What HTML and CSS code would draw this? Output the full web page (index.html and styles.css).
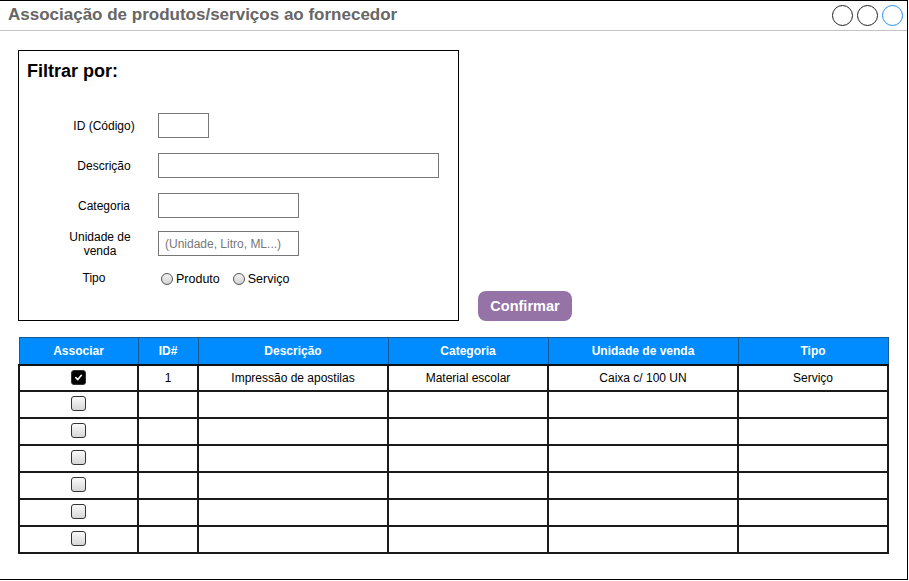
FILE: index.html
```html
<!DOCTYPE html>
<html lang="pt">
<head>
<meta charset="utf-8">
<title>Associação de produtos/serviços ao fornecedor</title>
<link rel="stylesheet" href="styles.css">
</head>
<body>
<div class="window">
  <div class="titlebar">
    <span class="title">Associação de produtos/serviços ao fornecedor</span>
    <div class="controls">
      <span class="dot"></span><span class="dot"></span><span class="dot blue"></span>
    </div>
  </div>
  <div class="content">
    <div class="top">
      <div class="filter">
        <h2 class="filter-title">Filtrar por:</h2>
        <div class="form">
          <div class="row r1"><span class="label">ID (Código)</span><span class="input w-id"></span></div>
          <div class="row r2"><span class="label">Descrição</span><span class="input w-desc"></span></div>
          <div class="row r3"><span class="label">Categoria</span><span class="input w-cat"></span></div>
          <div class="row r4"><span class="label">Unidade de venda</span><span class="input w-cat ph">(Unidade, Litro, ML...)</span></div>
          <div class="row r5"><span class="label">Tipo</span>
            <span class="radios"><span class="radio"></span>Produto<span class="radio second"></span>Serviço</span>
          </div>
        </div>
      </div>
      <button class="confirm">Confirmar</button>
    </div>
    <table class="grid">
      <colgroup>
        <col class="c1"><col class="c2"><col class="c3"><col class="c4"><col class="c5"><col class="c6">
      </colgroup>
      <thead>
        <tr><th>Associar</th><th>ID#</th><th>Descrição</th><th>Categoria</th><th>Unidade de venda</th><th>Tipo</th></tr>
      </thead>
      <tbody>
        <tr class="first"><td><span class="cb checked"><svg viewBox="0 0 10 10" width="9" height="9"><path d="M2 5.2 L4.2 7.3 L8.2 2.6" fill="none" stroke="#fff" stroke-width="1.8" stroke-linecap="round" stroke-linejoin="round"/></svg></span></td><td>1</td><td>Impressão de apostilas</td><td>Material escolar</td><td>Caixa c/ 100 UN</td><td>Serviço</td></tr>
        <tr><td><span class="cb"></span></td><td></td><td></td><td></td><td></td><td></td></tr>
        <tr><td><span class="cb"></span></td><td></td><td></td><td></td><td></td><td></td></tr>
        <tr><td><span class="cb"></span></td><td></td><td></td><td></td><td></td><td></td></tr>
        <tr><td><span class="cb"></span></td><td></td><td></td><td></td><td></td><td></td></tr>
        <tr><td><span class="cb"></span></td><td></td><td></td><td></td><td></td><td></td></tr>
        <tr><td><span class="cb"></span></td><td></td><td></td><td></td><td></td><td></td></tr>
      </tbody>
    </table>
  </div>
</div>
</body>
</html>
```
FILE: styles.css
```css
* { box-sizing: border-box; }
html, body { margin: 0; padding: 0; background: #fff; }
body { font-family: "Liberation Sans", Arial, sans-serif; color: #000; }

.window {
  width: 908px;
  height: 580px;
  border-top: 1px solid #000;
  border-right: 1px solid #000;
  border-bottom: 1px solid #000;
  overflow: hidden;
}

.titlebar {
  height: 30px;
  border-bottom: 1px solid #c4c4c4;
  display: flex;
  align-items: center;
  justify-content: space-between;
  padding: 0 4px 0 8px;
}
.title {
  font-size: 17px;
  font-weight: bold;
  color: #666;
  margin-top: -1px;
}
.controls { display: flex; gap: 4px; margin-top: -1px; }
.dot {
  width: 21px; height: 21px;
  border: 1.4px solid #222;
  border-radius: 50%;
}
.dot.blue { border-color: #1e90ff; }

.content { padding: 19px 0 0 18px; }

.top { display: flex; align-items: flex-end; gap: 19px; }

.filter {
  width: 441px;
  height: 271px;
  border: 1px solid #000;
  padding: 10px 8px 0 8px;
}
.filter-title {
  margin: 0;
  font-size: 18px;
  line-height: 20px;
  font-weight: bold;
}
.form { margin-top: 32px; }
.row { display: flex; align-items: center; height: 25px; }
.r2 { margin-top: 15px; }
.r3 { margin-top: 15px; }
.r4 { margin-top: 13px; }
.r5 { margin-top: 10px; }
.label {
  width: 82px;
  margin-left: 36px;
  margin-right: 13px;
  text-align: center;
  font-size: 12px;
  line-height: 14px;
  flex: none;
}
.r4 .label { padding: 0 10px 0 2px; }
.r5 .label { margin-top: -2px; padding-right: 20px; }
.input {
  height: 25px;
  border: 1px solid #777;
  background: #fff;
  display: flex;
  align-items: center;
  font-size: 12px;
}
.w-id { width: 51px; }
.w-desc { width: 281px; }
.w-cat { width: 141px; }
.ph { color: #777; padding-left: 6px; }
.radios { display: flex; align-items: center; font-size: 12.5px; padding-left: 3px; }
.radio {
  width: 12px; height: 12px;
  border: 1px solid #555;
  border-radius: 50%;
  background: linear-gradient(#f2f2f2, #d2d2d2);
  margin-right: 3px;
}
.radio.second { margin-left: 13px; }

.confirm {
  width: 94px;
  height: 30px;
  border: none;
  border-radius: 8px;
  background: #9673a6;
  color: #fff;
  font-family: "Liberation Sans", Arial, sans-serif;
  font-size: 14.5px;
  font-weight: bold;
  padding: 0;
}

.grid {
  margin-top: 16px;
  width: 869px;
  border-collapse: collapse;
  table-layout: fixed;
  font-size: 12px;
}
.c1 { width: 119px; } .c2 { width: 60px; } .c3 { width: 190px; }
.c4 { width: 160px; } .c5 { width: 190px; } .c6 { width: 150px; }
.grid th {
  background: #008cff;
  color: #fff;
  font-weight: bold;
  height: 27px;
  border: 1px solid #1a5a90;
  border-bottom: 2px solid #111;
  padding: 0;
}
.grid td {
  height: 27px;
  border: 2px solid #1a1a1a;
  text-align: center;
  padding: 0;
  vertical-align: middle;
}
.grid tr.first td { height: 26px; }
.cb {
  display: inline-block;
  width: 15px; height: 15px;
  border: 1px solid #333;
  border-radius: 3px;
  background: linear-gradient(#fafafa, #d6d6d6);
  vertical-align: middle;
  margin-top: -2px;
}
.cb.checked {
  background: #000;
  display: inline-flex;
  align-items: center;
  justify-content: center;
}
```
